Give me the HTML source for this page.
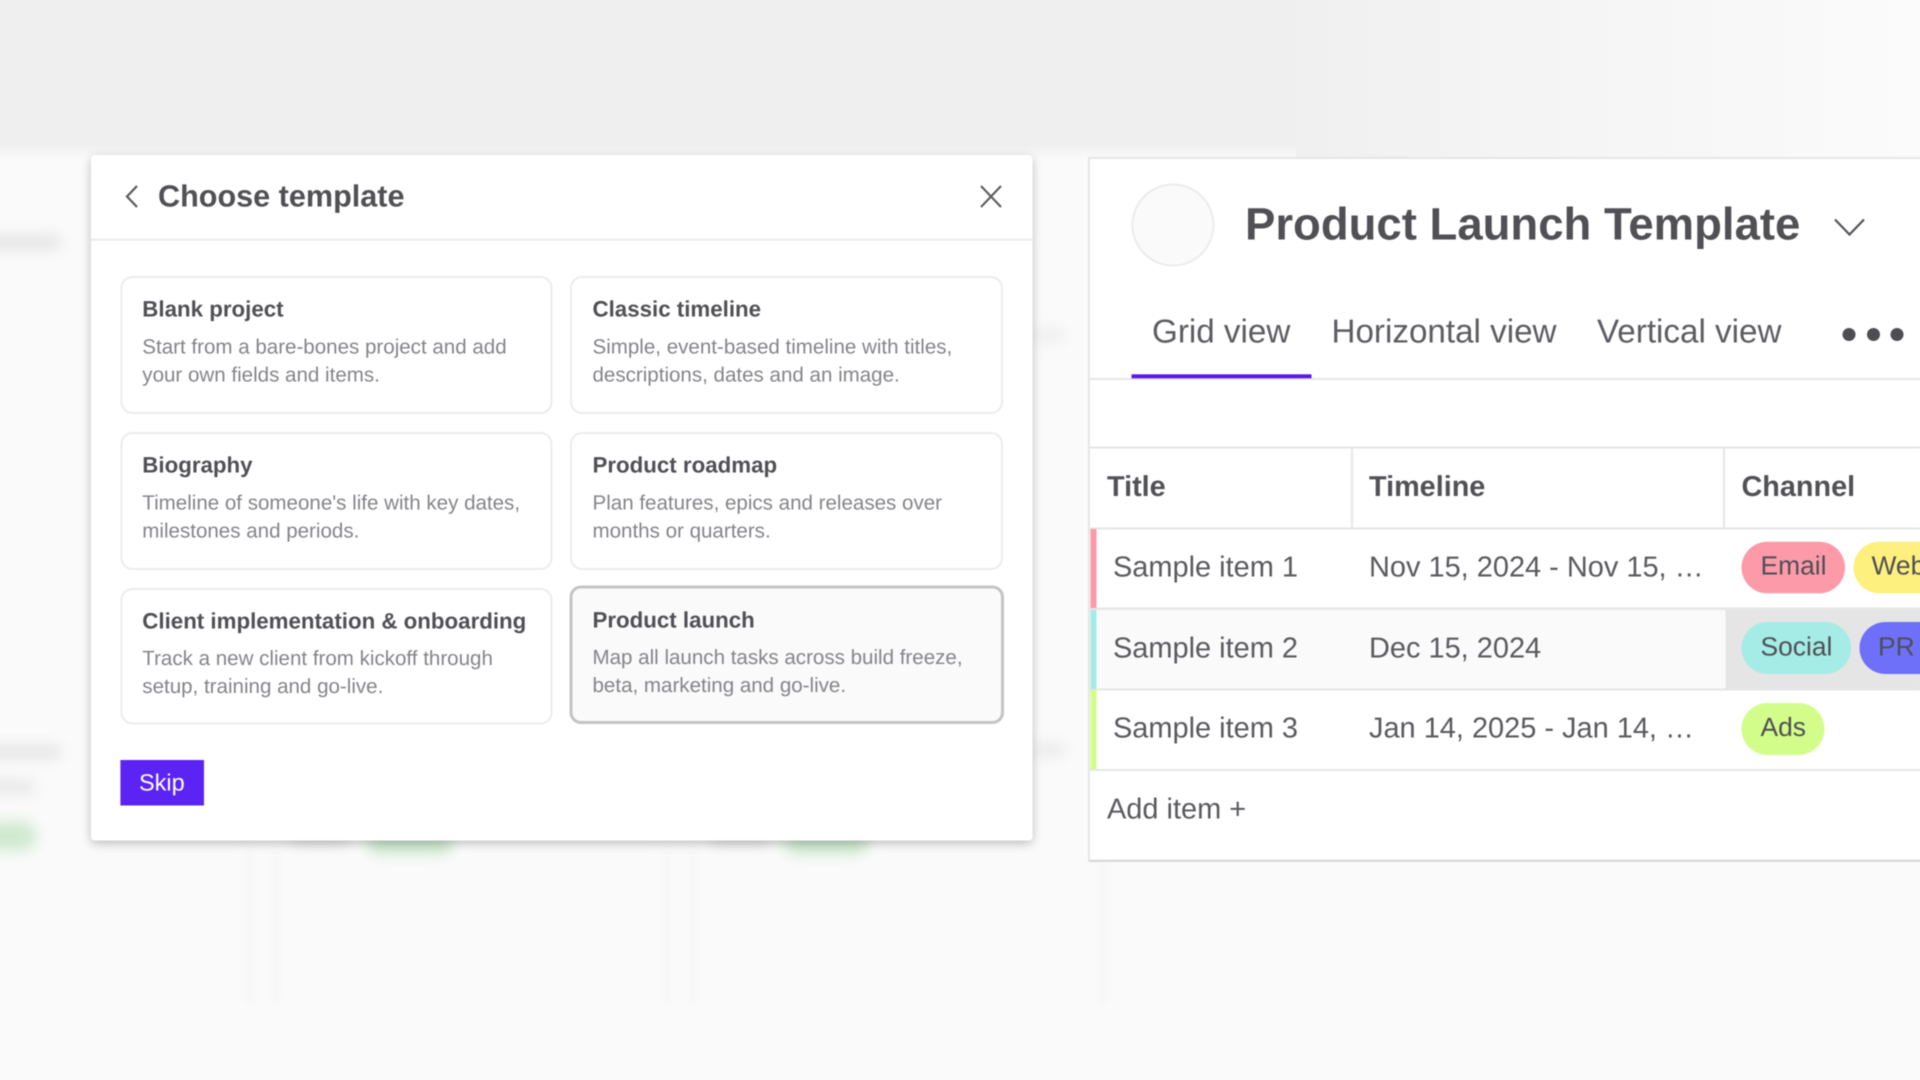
<!DOCTYPE html>
<html lang="en">
<head>
<meta charset="utf-8">
<title>Choose template</title>
<style>
html,body{margin:0;padding:0;width:1920px;height:1080px;overflow:hidden;background:#fafafa}
svg{position:absolute;left:0;top:0;display:block}
#sharp{filter:blur(.55px)}
text{font-family:"Liberation Sans",sans-serif;text-rendering:geometricPrecision}
.ct{font-size:22.3px;font-weight:700;fill:#505055}
.cd{font-size:20.56px;fill:#85858a}
.h{font-size:28.8px;font-weight:700;fill:#515156}
.r{font-size:28.95px;fill:#5a5a5f}
.tab{font-size:33.2px;fill:#5c5c62}
.p{font-size:26.4px;fill:#4f4f55}
</style>
</head>
<body>
<svg width="1920" height="1080" viewBox="0 0 1920 1080" xmlns="http://www.w3.org/2000/svg">
  <defs>
    <linearGradient id="tr" x1="0" x2="1" y1="0" y2="0">
      <stop offset="0" stop-color="#f0f0f0"/><stop offset="1" stop-color="#fbfbfb"/>
    </linearGradient>
    <linearGradient id="fade" x1="0" x2="0" y1="0" y2="1">
      <stop offset="0" stop-color="#efefef"/><stop offset="1" stop-color="#fafafa"/>
    </linearGradient>
    <filter id="b6" filterUnits="userSpaceOnUse" x="-60" y="200" width="1200" height="700"><feGaussianBlur stdDeviation="7"/></filter>
    <filter id="bl" x="-300%" y="-10%" width="700%" height="120%"><feGaussianBlur stdDeviation="4"/></filter>
    <filter id="sh" x="-5%" y="-5%" width="110%" height="112%"><feDropShadow dx="0" dy="3" stdDeviation="5" flood-color="#000" flood-opacity=".24"/></filter>
  </defs>
  <rect width="1920" height="1080" fill="#fafafa"/>
  <rect x="0" y="0" width="1296" height="145" fill="#efefef"/>
  <rect x="0" y="145" width="1296" height="14" fill="url(#fade)"/>
  <rect x="1296" y="0" width="624" height="160" fill="url(#tr)"/>
  <!-- blurred backdrop -->
  <g filter="url(#b6)">
    <rect x="-30" y="236" width="90" height="13" fill="#e2e2e2"/>
    <rect x="1034" y="330" width="30" height="11" fill="#ebebeb"/>
    <rect x="-30" y="746" width="90" height="12" fill="#e2e2e2"/>
    <rect x="-30" y="781" width="64" height="12" fill="#e5e5e5"/>
    <rect x="1034" y="744" width="30" height="12" fill="#e8e8e8"/>
    <rect x="-30" y="822" width="66" height="28" rx="10" fill="#cfe9cf"/>
    <rect x="368" y="830" width="84" height="24" rx="10" fill="#cbe7cb"/>
    <rect x="785" y="830" width="82" height="24" rx="10" fill="#cbe7cb"/>
    <rect x="292" y="834" width="56" height="10" fill="#dedede"/>
    <rect x="712" y="834" width="56" height="10" fill="#dedede"/>
  </g>
  <g fill="#f4f4f4" filter="url(#bl)">
    <rect x="247" y="850" width="5" height="153"/><rect x="274" y="850" width="5" height="153"/>
    <rect x="664" y="850" width="5" height="153"/><rect x="691" y="850" width="5" height="153"/>
    <rect x="1100" y="850" width="5" height="153"/>
  </g>
  <g id="sharp">
    <!-- modal -->
    <rect x="91" y="155" width="941.5" height="685.5" rx="4" fill="#fff" filter="url(#sh)"/>
    <rect x="91" y="238.8" width="941.5" height="2" fill="#ececec"/>
    <path d="M137 186 L127 196.5 L137 207" fill="none" stroke="#5a5a5f" stroke-width="2.2"/>
    <text x="158" y="206.6" font-size="30.6" font-weight="700" fill="#505055">Choose template</text>
    <path d="M981 186 L1001 207 M1001 186 L981 207" fill="none" stroke="#5a5a5f" stroke-width="2"/>

    <g fill="#fff" stroke="#ececec" stroke-width="2">
      <rect x="121.5" y="277" width="430" height="136" rx="11"/>
      <rect x="571" y="277" width="431" height="136" rx="11"/>
      <rect x="121.5" y="433" width="430" height="136" rx="11"/>
      <rect x="571" y="433" width="431" height="136" rx="11"/>
      <rect x="121.5" y="589" width="430" height="134.5" rx="11"/>
    </g>
    <rect x="571" y="587" width="431.5" height="135.5" rx="10" fill="#fafafa" stroke="#c4c4c4" stroke-width="3"/>

    <text class="ct" x="142.3" y="316.7">Blank project</text>
    <text class="cd" x="142.3" y="353.3">Start from a bare-bones project and add</text>
    <text class="cd" x="142.3" y="381.5">your own fields and items.</text>

    <text class="ct" x="592.5" y="316.7">Classic timeline</text>
    <text class="cd" x="592.5" y="353.3">Simple, event-based timeline with titles,</text>
    <text class="cd" x="592.5" y="381.5">descriptions, dates and an image.</text>

    <text class="ct" x="142.3" y="472.7">Biography</text>
    <text class="cd" x="142.3" y="509.3">Timeline of someone's life with key dates,</text>
    <text class="cd" x="142.3" y="537.5">milestones and periods.</text>

    <text class="ct" x="592.5" y="472.7">Product roadmap</text>
    <text class="cd" x="592.5" y="509.3">Plan features, epics and releases over</text>
    <text class="cd" x="592.5" y="537.5">months or quarters.</text>

    <text class="ct" x="142.3" y="628.7">Client implementation &amp; onboarding</text>
    <text class="cd" x="142.3" y="664.8">Track a new client from kickoff through</text>
    <text class="cd" x="142.3" y="693">setup, training and go-live.</text>

    <text class="ct" x="592.5" y="627.4">Product launch</text>
    <text class="cd" x="592.5" y="664">Map all launch tasks across build freeze,</text>
    <text class="cd" x="592.5" y="692.2">beta, marketing and go-live.</text>

    <rect x="120.4" y="760" width="83.6" height="45.5" fill="#5b24f5"/>
    <text x="139" y="790.5" font-size="23.5" fill="#fff">Skip</text>

    <!-- right panel -->
    <rect x="1089" y="158" width="840" height="702.5" fill="#fff" stroke="#e6e6e6" stroke-width="2"/>
    <rect x="1089" y="860" width="840" height="2" fill="#d9d9d9"/>
    <circle cx="1173" cy="225" r="40.5" fill="#fafafa" stroke="#ececec" stroke-width="2"/>
    <text x="1245" y="239.3" font-size="45.5" font-weight="700" fill="#505055">Product Launch Template</text>
    <path d="M1835 219.5 L1849.5 234.5 L1864 219.5" fill="none" stroke="#55555a" stroke-width="2.2"/>
    <text class="tab" x="1152" y="342.7">Grid view</text>
    <text class="tab" x="1331.5" y="342.7">Horizontal view</text>
    <text class="tab" x="1597" y="342.7">Vertical view</text>
    <g fill="#4d4d52"><circle cx="1849" cy="334.5" r="6.5"/><circle cx="1873.5" cy="334.5" r="6.5"/><circle cx="1897" cy="334.5" r="6.5"/></g>
    <rect x="1090" y="378" width="830" height="2" fill="#e6e6e6"/>
    <rect x="1131.5" y="374.3" width="180" height="4" fill="#5b17f0"/>

    <!-- table -->
    <rect x="1090" y="446.5" width="830" height="2" fill="#e6e6e6"/>
    <rect x="1351" y="448" width="2" height="80" fill="#e6e6e6"/>
    <rect x="1723" y="448" width="2" height="80" fill="#e6e6e6"/>
    <rect x="1097" y="609" width="628.5" height="79.5" fill="#fafafa"/>
    <rect x="1725.5" y="609" width="195" height="79.5" fill="#e5e5e5"/>
    <rect x="1090" y="527.5" width="830" height="2" fill="#e6e6e6"/>
    <rect x="1090" y="607.5" width="830" height="2.4" fill="#e6e6e6"/>
    <rect x="1090" y="688.5" width="830" height="2" fill="#e6e6e6"/>
    <rect x="1090" y="769" width="830" height="2" fill="#e6e6e6"/>
    <rect x="1090.5" y="529" width="6" height="79" fill="#fd9aaa"/>
    <rect x="1090.5" y="610" width="6" height="79" fill="#a5ebe6"/>
    <rect x="1090.5" y="690" width="6" height="79" fill="#d3fd8b"/>

    <text class="h" x="1107" y="496">Title</text>
    <text class="h" x="1369" y="496">Timeline</text>
    <text class="h" x="1741.5" y="496">Channel</text>

    <text class="r" x="1113" y="576.4">Sample item 1</text>
    <text class="r" x="1369" y="576.4">Nov 15, 2024 - Nov 15, …</text>
    <text class="r" x="1113" y="657.3">Sample item 2</text>
    <text class="r" x="1369" y="657.3">Dec 15, 2024</text>
    <text class="r" x="1113" y="737.7">Sample item 3</text>
    <text class="r" x="1369" y="737.7">Jan 14, 2025 - Jan 14, …</text>
    <text class="r" x="1107" y="818.3">Add item +</text>

    <rect x="1741.5" y="541.7" width="103.5" height="51.6" rx="25.8" fill="#fd9aaa"/>
    <rect x="1853.5" y="541.7" width="100" height="51.6" rx="25.8" fill="#fdf07f"/>
    <rect x="1741.5" y="622" width="109.5" height="52" rx="26" fill="#a5ebe6"/>
    <rect x="1859.5" y="622" width="100" height="52" rx="26" fill="#6e70fa"/>
    <rect x="1741.5" y="703" width="83" height="52" rx="26" fill="#d3fd8b"/>
    <text class="p" x="1760.5" y="574.3">Email</text>
    <text class="p" x="1871.5" y="574.3">Web</text>
    <text class="p" x="1760.5" y="655.3">Social</text>
    <text class="p" x="1878" y="655.3">PR</text>
    <text class="p" x="1760.5" y="736">Ads</text>
  </g>
</svg>
</body>
</html>
